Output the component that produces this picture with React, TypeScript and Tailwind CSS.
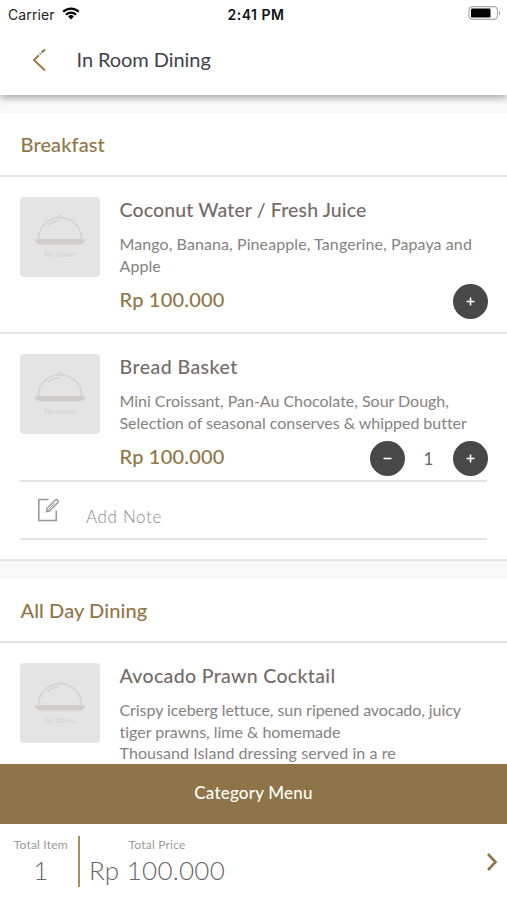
import { ReactNode } from 'react';

interface MenuItem {
  name: string;
  nameClass: string;
  lines: { text: string; className: string }[];
}

const coconut: MenuItem = {
  name: 'Coconut Water / Fresh Juice',
  nameClass: 'tracking-[0.13px]',
  lines: [
    { text: 'Mango, Banana, Pineapple, Tangerine, Papaya and', className: 'tracking-[0.09px]' },
    { text: 'Apple', className: 'tracking-[0.09px]' },
  ],
};

const bread: MenuItem = {
  name: 'Bread Basket',
  nameClass: 'tracking-[0.46px]',
  lines: [
    { text: 'Mini Croissant, Pan-Au Chocolate, Sour Dough,', className: 'tracking-[-0.02px]' },
    { text: 'Selection of seasonal conserves & whipped butter', className: 'tracking-[-0.03px]' },
  ],
};

const avocado: MenuItem = {
  name: 'Avocado Prawn Cocktail',
  nameClass: 'tracking-[0.34px]',
  lines: [
    { text: 'Crispy iceberg lettuce, sun ripened avocado, juicy', className: 'tracking-[-0.06px]' },
    { text: 'tiger prawns, lime & homemade', className: 'tracking-[-0.02px]' },
    { text: 'Thousand Island dressing served in a re', className: 'tracking-[0.07px]' },
  ],
};

function StatusBar() {
  return (
    <div className="grid h-[26px] shrink-0 grid-cols-3 items-center pl-2 pr-[6px] pt-[2px] font-['Inter','Liberation_Sans',sans-serif] text-[14px] text-[#222]">
      <div className="flex items-center gap-[7px]">
        <span className="tracking-[0.1px]">Carrier</span>
        <svg className="-mt-[2px]" width="18" height="13" viewBox="0 0 18 13" fill="none" stroke="#000" strokeWidth="2.2">
          <path d="M1.2 4.8a11 11 0 0 1 15.6 0" />
          <path d="M4 7.8a7 7 0 0 1 10 0" />
          <path d="M9 12.4 6.1 9.5a4.2 4.2 0 0 1 5.8 0z" fill="#000" stroke="none" />
        </svg>
      </div>
      <span className="whitespace-nowrap pl-[3px] text-center text-[14px] font-semibold tracking-[0.5px] text-[#111]">2:41 PM</span>
      <svg className="-mt-[2px] justify-self-end" width="33" height="14" viewBox="0 0 33 14" fill="none">
        <rect x="1" y="0.7" width="28.5" height="12.6" rx="3.6" stroke="#aaa" strokeWidth="1.2" />
        <rect x="3" y="2.6" width="19.5" height="8.8" rx="1.2" fill="#000" />
        <path d="M31 5v4c1.4-.4 1.4-3.6 0-4z" fill="#999" />
      </svg>
    </div>
  );
}

function DishPlaceholder() {
  return (
    <div className="flex h-20 w-20 shrink-0 flex-col items-center rounded-[4px] bg-[#e4e4e4] pt-[16px]">
      <svg width="52" height="33" viewBox="0 0 52 33" fill="none">
        <path d="M4.5 26C5 13 14 4.8 26 4.8S47 13 47.5 26" stroke="#cfcfcf" strokeWidth="1.3" />
        <path d="M24 4.5q0-1.5 2-2.5q2 1 2 2.5" stroke="#cfcfcf" />
        <path d="M13.5 12.5C17 9.5 20.5 8 25 7.7" stroke="#cfcfcf" strokeWidth="1.6" />
        <path d="M1 26h50v1.5c-1 2.5-3 4-6 4H7c-3 0-5-1.5-6-4z" fill="#cfcccc" />
      </svg>
      <span className="mt-[4px] text-[7.5px] leading-[10px] text-[#d3d3d3]">No photo</span>
    </div>
  );
}

function RoundButton({ minus = false }: { minus?: boolean }) {
  return (
    <button className="flex h-[35px] w-[35px] items-center justify-center rounded-full bg-[#484848]">
      <svg width="9" height="9" viewBox="0 0 9 9" stroke="#fff" strokeWidth="1.6">
        <path d={minus ? 'M.5 4.5h8' : 'M.5 4.5h8M4.5.5v8'} />
      </svg>
    </button>
  );
}

function Dish({ item, children }: { item: MenuItem; children?: ReactNode }) {
  return (
    <div className="flex gap-[19.5px] pl-[20px] pr-[19.5px] pt-[20px]">
      <DishPlaceholder />
      <div className="min-w-0 flex-1 whitespace-nowrap">
        <h3 className={`text-[19.5px] font-medium leading-[26px] text-[#736c69] ${item.nameClass}`}>{item.name}</h3>
        <div className="mt-[10px] text-[16px] leading-[21.7px] text-[#85827f]">
          {item.lines.map(line => (
            <p key={line.text} className={line.className}>
              {line.text}
            </p>
          ))}
        </div>
        {children}
      </div>
    </div>
  );
}

function PriceRow({ children }: { children: ReactNode }) {
  return (
    <div className="mt-[4px] flex h-[42px] items-start justify-between">
      <span className="-mt-[1px] text-[20px] font-medium leading-[40px] tracking-[0.2px] text-[#917546]">Rp 100.000</span>
      <div className="flex items-center pt-[3.5px]">{children}</div>
    </div>
  );
}

function SectionTitle({ title, className }: { title: string; className: string }) {
  return (
    <h2 className={`flex h-[64px] items-center border-b-2 border-[#e3e3e3] pl-[20.5px] text-[20px] font-medium text-[#917546] ${className}`}>
      {title}
    </h2>
  );
}

export default function App() {
  return (
    <div className="flex h-[900px] w-[507px] flex-col overflow-hidden bg-white font-['Lato','Open_Sans',sans-serif]">
      <div className="relative z-10 h-[95px] shrink-0 bg-white shadow-[0_3px_7px_rgba(0,0,0,0.32)]">
        <StatusBar />
        <header className="flex h-[69px] items-center pb-[2px] pl-[32px]">
          <svg width="15" height="24" viewBox="0 0 15 24" fill="none" strokeWidth="2">
            <path d="M7 7.2 2 12l11 10.500" stroke="#a07a45" />
            <path d="m7.800 6.300 1-1" stroke="#8f8b78" />
            <path d="m9.600 4.600 3.400-3.100" stroke="#7f7d3c" />
          </svg>
          <h1 className="ml-[29.5px] whitespace-nowrap pb-[2px] text-[20px] tracking-[-0.07px] text-[#41424a]">In Room Dining</h1>
        </header>
      </div>

      <main className="h-[669px] shrink-0 overflow-hidden bg-[#f8f8f8] pt-[18px]">
        <section className="bg-white">
          <SectionTitle title="Breakfast" className="tracking-[0.1px]" />
          <div className="h-[157px] border-b-2 border-[#e6e6e6]">
            <Dish item={coconut}>
              <PriceRow>
                <RoundButton />
              </PriceRow>
            </Dish>
          </div>
          <div className="h-[227px] border-b-2 border-[#e6e6e6]">
            <Dish item={bread}>
              <PriceRow>
                <RoundButton minus />
                <span className="w-[48px] text-center text-[17px] text-[#666]">1</span>
                <RoundButton />
              </PriceRow>
            </Dish>
            <div className="mx-5 mt-[1px] flex h-[60px] items-center border-y-2 border-[#e3e3e3] pl-[17px]">
              <svg className="mb-[1px]" width="23" height="26" viewBox="0 0 23 26" fill="none" stroke="#999" strokeWidth="1.6">
                <path d="M11.500 2.500H1.800v21h17.500v-10" strokeLinejoin="round" />
                <path d="m9.500 14.700.5-3.400 8.300-8.300q1.200-.9 2.300.2t.2 2.300l-8.200 8.500z" strokeWidth="1.400" />
                <path d="m10.500 13.700 6.800-7.300" strokeWidth="1" />
              </svg>
              <span className="ml-[26px] pt-[12px] text-[17px] font-light tracking-[0.65px] text-[#8c8c8c]">Add Note</span>
            </div>
          </div>
        </section>

        <section className="mt-[18px] bg-white">
          <SectionTitle title="All Day Dining" className="tracking-[0.1px]" />
          <Dish item={avocado} />
        </section>
      </main>

      <button className="h-[60px] shrink-0 bg-[#8e7446] pb-[2px] text-[17px] font-medium tracking-[0.2px] text-white">
        Category Menu
      </button>

      <footer className="flex h-[76px] shrink-0 items-start whitespace-nowrap pt-[12px] text-[#666]">
        <div className="flex w-[77.5px] flex-col items-center pl-[4px]">
          <span className="pt-[1px] text-[12px] leading-[16px] tracking-[0.2px] text-[#999]">Total Item</span>
          <span className="text-[26px] font-light leading-[34px]">1</span>
        </div>
        <div className="h-[51px] w-[2px] bg-[#a98f60]" />
        <div className="ml-[9.5px] flex w-[136px] flex-col items-center">
          <span className="pt-[1px] text-[12px] leading-[16px] tracking-[0.2px] text-[#999]">Total Price</span>
          <span className="text-[26px] font-light leading-[34px] tracking-[0.25px]">Rp 100.000</span>
        </div>
        <svg className="ml-auto mr-[9px] mt-[16px]" width="12" height="20" viewBox="0 0 12 20" fill="none" stroke="#917546" strokeWidth="2.6">
          <path d="m2 2 7.500 8L2 18" />
        </svg>
      </footer>
    </div>
  );
}
